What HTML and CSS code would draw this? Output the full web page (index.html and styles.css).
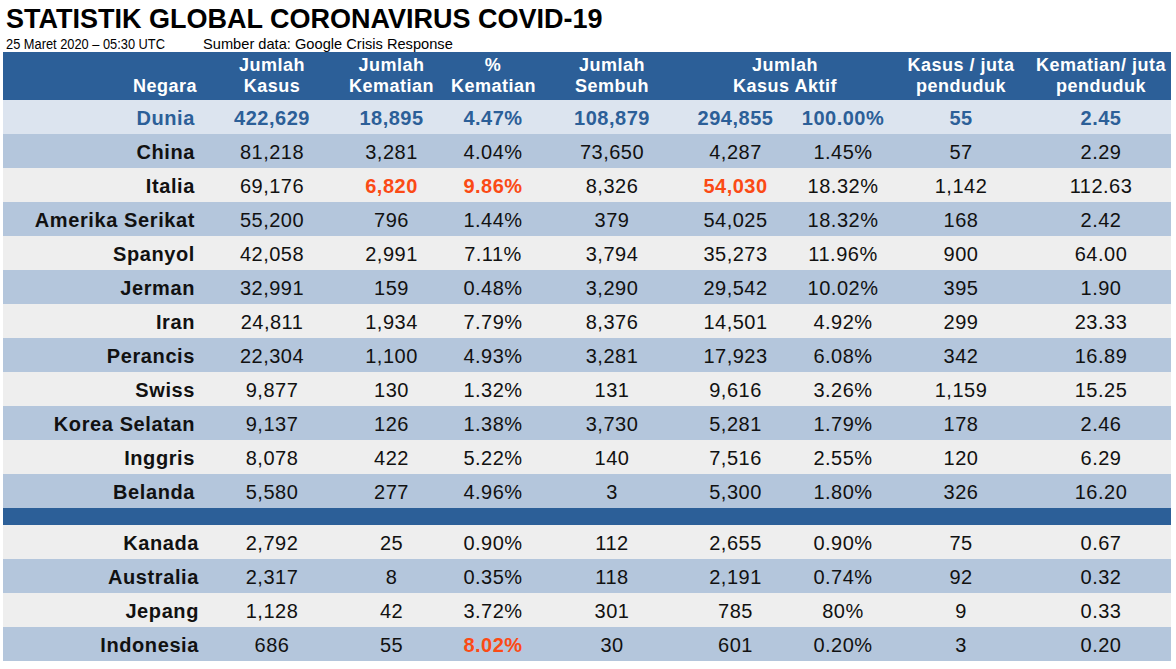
FILE: index.html
```html
<!DOCTYPE html>
<html lang="id">
<head>
<meta charset="utf-8">
<title>Statistik Global Coronavirus COVID-19</title>
<link rel="stylesheet" href="styles.css">
</head>
<body>
<div class="page">
  <h1 class="title">STATISTIK GLOBAL CORONAVIRUS COVID-19</h1>
  <div class="meta">
    <span class="date">25 Maret 2020 – 05:30 UTC</span>
    <span class="source">Sumber data: Google Crisis Response</span>
  </div>
  <div class="table">
    <div class="row head">
      <div class="c name">Negara</div>
      <div class="c">Jumlah<br>Kasus</div>
      <div class="c">Jumlah<br>Kematian</div>
      <div class="c">%<br>Kematian</div>
      <div class="c">Jumlah<br>Sembuh</div>
      <div class="c span2">Jumlah<br>Kasus Aktif</div>
      <div class="c">Kasus / juta<br>penduduk</div>
      <div class="c last">Kematian/ juta<br>penduduk</div>
    </div>
    <div class="row world">
      <div class="c name">Dunia</div>
      <div class="c">422,629</div><div class="c">18,895</div><div class="c">4.47%</div><div class="c">108,879</div><div class="c">294,855</div><div class="c">100.00%</div><div class="c">55</div><div class="c last">2.45</div>
    </div>
    <div class="row dark">
      <div class="c name">China</div>
      <div class="c">81,218</div><div class="c">3,281</div><div class="c">4.04%</div><div class="c">73,650</div><div class="c">4,287</div><div class="c">1.45%</div><div class="c">57</div><div class="c last">2.29</div>
    </div>
    <div class="row light">
      <div class="c name">Italia</div>
      <div class="c">69,176</div><div class="c hot">6,820</div><div class="c hot">9.86%</div><div class="c">8,326</div><div class="c hot">54,030</div><div class="c">18.32%</div><div class="c">1,142</div><div class="c last">112.63</div>
    </div>
    <div class="row dark">
      <div class="c name">Amerika Serikat</div>
      <div class="c">55,200</div><div class="c">796</div><div class="c">1.44%</div><div class="c">379</div><div class="c">54,025</div><div class="c">18.32%</div><div class="c">168</div><div class="c last">2.42</div>
    </div>
    <div class="row light">
      <div class="c name">Spanyol</div>
      <div class="c">42,058</div><div class="c">2,991</div><div class="c">7.11%</div><div class="c">3,794</div><div class="c">35,273</div><div class="c">11.96%</div><div class="c">900</div><div class="c last">64.00</div>
    </div>
    <div class="row dark">
      <div class="c name">Jerman</div>
      <div class="c">32,991</div><div class="c">159</div><div class="c">0.48%</div><div class="c">3,290</div><div class="c">29,542</div><div class="c">10.02%</div><div class="c">395</div><div class="c last">1.90</div>
    </div>
    <div class="row light">
      <div class="c name">Iran</div>
      <div class="c">24,811</div><div class="c">1,934</div><div class="c">7.79%</div><div class="c">8,376</div><div class="c">14,501</div><div class="c">4.92%</div><div class="c">299</div><div class="c last">23.33</div>
    </div>
    <div class="row dark">
      <div class="c name">Perancis</div>
      <div class="c">22,304</div><div class="c">1,100</div><div class="c">4.93%</div><div class="c">3,281</div><div class="c">17,923</div><div class="c">6.08%</div><div class="c">342</div><div class="c last">16.89</div>
    </div>
    <div class="row light">
      <div class="c name">Swiss</div>
      <div class="c">9,877</div><div class="c">130</div><div class="c">1.32%</div><div class="c">131</div><div class="c">9,616</div><div class="c">3.26%</div><div class="c">1,159</div><div class="c last">15.25</div>
    </div>
    <div class="row dark">
      <div class="c name">Korea Selatan</div>
      <div class="c">9,137</div><div class="c">126</div><div class="c">1.38%</div><div class="c">3,730</div><div class="c">5,281</div><div class="c">1.79%</div><div class="c">178</div><div class="c last">2.46</div>
    </div>
    <div class="row light">
      <div class="c name">Inggris</div>
      <div class="c">8,078</div><div class="c">422</div><div class="c">5.22%</div><div class="c">140</div><div class="c">7,516</div><div class="c">2.55%</div><div class="c">120</div><div class="c last">6.29</div>
    </div>
    <div class="row dark">
      <div class="c name">Belanda</div>
      <div class="c">5,580</div><div class="c">277</div><div class="c">4.96%</div><div class="c">3</div><div class="c">5,300</div><div class="c">1.80%</div><div class="c">326</div><div class="c last">16.20</div>
    </div>
    <div class="sep"></div>
    <div class="row light lower">
      <div class="c name">Kanada</div>
      <div class="c">2,792</div><div class="c">25</div><div class="c">0.90%</div><div class="c">112</div><div class="c">2,655</div><div class="c">0.90%</div><div class="c">75</div><div class="c last">0.67</div>
    </div>
    <div class="row dark lower">
      <div class="c name">Australia</div>
      <div class="c">2,317</div><div class="c">8</div><div class="c">0.35%</div><div class="c">118</div><div class="c">2,191</div><div class="c">0.74%</div><div class="c">92</div><div class="c last">0.32</div>
    </div>
    <div class="row light lower">
      <div class="c name">Jepang</div>
      <div class="c">1,128</div><div class="c">42</div><div class="c">3.72%</div><div class="c">301</div><div class="c">785</div><div class="c">80%</div><div class="c">9</div><div class="c last">0.33</div>
    </div>
    <div class="row dark lower">
      <div class="c name">Indonesia</div>
      <div class="c">686</div><div class="c">55</div><div class="c hot">8.02%</div><div class="c">30</div><div class="c">601</div><div class="c">0.20%</div><div class="c">3</div><div class="c last">0.20</div>
    </div>
  </div>
</div>
</body>
</html>
```
FILE: styles.css
```css
* { box-sizing: border-box; }
html, body { margin: 0; padding: 0; background: #ffffff; }
body {
  font-family: "Liberation Sans", Arial, sans-serif;
  color: #111111;
}
.page {
  width: 1176px;
  padding: 4px 5px 0 3px;
}
.title {
  margin: 0;
  padding-left: 3px;
  font-size: 27px;
  line-height: 30px;
  font-weight: bold;
  color: #000000;
  white-space: nowrap;
}
.meta {
  display: flex;
  align-items: baseline;
  height: 18px;
  padding: 2px 0 0 3px;
  font-family: "Liberation Sans", Arial, sans-serif;
  line-height: 16px;
  color: #000000;
  white-space: nowrap;
}
.meta .date {
  width: 197px;
  font-size: 14px;
  transform: scaleX(0.916);
  transform-origin: left center;
}
.meta .source {
  font-size: 15px;
  transform: scaleX(0.976);
  transform-origin: left center;
}
.table {
  display: flex;
  flex-direction: column;
}
.row {
  display: grid;
  grid-template-columns: 209px 120px 119px 84px 154px 93px 122px 114px 153px;
  height: 34px;
  font-size: 20px;
  letter-spacing: 0.5px;
}
.c {
  text-align: center;
  white-space: nowrap;
  line-height: 30px;
  padding-top: 3px;
}
.c.name {
  text-align: right;
  padding-right: 17px;
  font-weight: bold;
  letter-spacing: 0.6px;
}
.lower .c.name { padding-right: 13px; }
.c.last { padding-left: 13px; }
.head {
  height: 48px;
  background: #2c5f98;
  color: #ffffff;
  font-weight: bold;
  font-size: 18px;
}
.head .c {
  align-self: end;
  line-height: 21px;
  padding: 0 0 3px 0;
  letter-spacing: 0.5px;
}
.head .c.name { padding-right: 15px; }
.head .c.last { padding-left: 13px; }
.head .c.span2 {
  grid-column: span 2;
  padding-right: 23px;
}
.world {
  background: #dce4ef;
  color: #2c5f98;
  font-weight: bold;
}
.dark { background: #b4c6dc; }
.light { background: #eeeeee; }
.hot {
  color: #fb4a15;
  font-weight: bold;
}
.sep {
  height: 17px;
  background: #2c5f98;
}
```
